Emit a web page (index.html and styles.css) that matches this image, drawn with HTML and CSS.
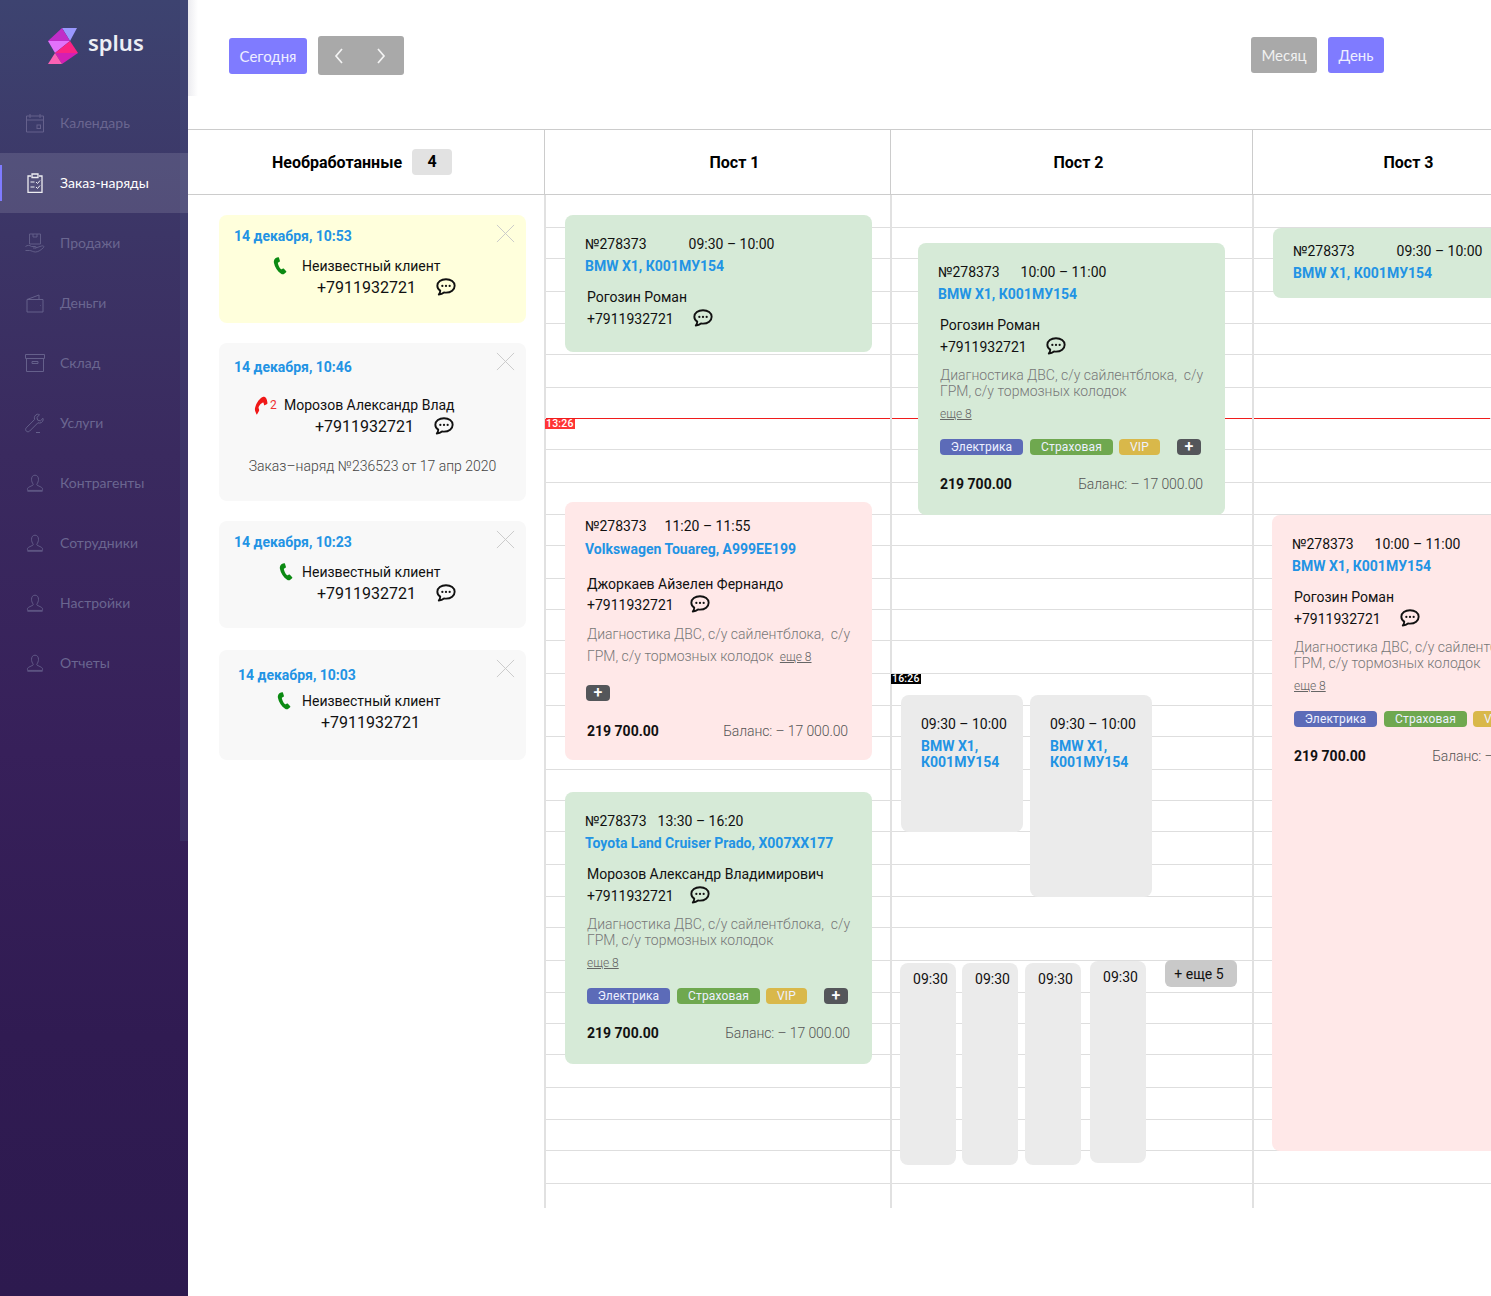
FILE: index.html
```html
<!DOCTYPE html>
<html lang="ru">
<head>
<meta charset="utf-8">
<title>splus</title>
<link rel="stylesheet" href="styles.css">
</head>
<body>
<svg class="sprite" aria-hidden="true">
  <symbol id="chat" viewBox="0 0 18 16"><path d="M9 1C4.600 1 1.200 3.400 1.200 6.900c0 1.900 1 3.400 2.600 4.400 0 1.100-.4 2.300-1.300 3.500 1.900-.2 3.500-.9 4.700-1.900.6.100 1.200.2 1.800.2 4.400 0 7.800-2.700 7.800-6.200S13.400 1 9 1z" fill="none" stroke="currentColor" stroke-width="1.700" stroke-linejoin="round"/><circle cx="5.700" cy="7" r="1" fill="currentColor"/><circle cx="9" cy="7" r="1" fill="currentColor"/><circle cx="12.300" cy="7" r="1" fill="currentColor"/></symbol>
  <symbol id="phone" viewBox="0 0 14 18"><path d="M3.300.8 5 .2c.4-.1.700 0 .9.400l1 3.200c.1.400 0 .7-.3.900L5.200 5.500c-.3.200-.4.500-.3.900.5 2.200 1.500 4.100 2.900 5.700.2.300.6.300.9.200l1.300-.7c.3-.2.700-.1.900.2l2.300 2.500c.3.300.2.700-.1.900l-1.500 1.300c-1.100 1-2.300 1.200-3.500.3C4.500 14.500 1.700 10.300.900 5.800.5 3.600 1.500 1.700 3.300.8z" fill="currentColor"/></symbol>
  <symbol id="close" viewBox="0 0 20 20"><path d="M1 1l18 18M19 1 1 19" fill="none" stroke="currentColor" stroke-width="1"/></symbol>
  <symbol id="i-cal" viewBox="0 0 20 20"><path d="M1.500 3h17v16h-17zM1.500 7h17M5 1v4M15 1v4" fill="none" stroke="currentColor"/><rect x="12" y="12" width="3.500" height="3.500" fill="none" stroke="currentColor"/></symbol>
  <symbol id="i-clip" viewBox="0 0 20 20"><path d="M6 3H3v16.500h14V3h-3M7 1h6v3.500H7z" fill="none" stroke="currentColor" stroke-width="1.300"/><path d="M5.500 9h4M5.500 14h4M11 9l1.500 1.500L15 7.500M11 14l1.500 1.500 2.500-3" fill="none" stroke="currentColor"/></symbol>
  <symbol id="i-hand" viewBox="0 0 20 20"><path d="M4.500 1h11v10h-11zM8 1v3h4V1" fill="none" stroke="currentColor" stroke-width=".9"/><path d="M.5 13.500c2-1.500 4-1.500 6 0h4c1 0 1 1.500 0 1.500H8m2.500 0 6-2c2-.5 3 .5 2 1.500-2 2-5 4.500-8 4.500-2.500 0-4-1.500-6-1.500H.5" fill="none" stroke="currentColor" stroke-width=".9"/></symbol>
  <symbol id="i-wallet" viewBox="0 0 20 20"><path d="M2 6.500 14 2v4.500M18 6.500H2v12.500h16zM15.500 12.500h.5" fill="none" stroke="currentColor"/></symbol>
  <symbol id="i-box" viewBox="0 0 20 20"><path d="M.5 1.500h19v4H.5zM1.500 5.500v13h17v-13M7 8.500h6v2H7z" fill="none" stroke="currentColor"/></symbol>
  <symbol id="i-wrench" viewBox="0 0 20 20"><path d="M12.500 1.200c-2.500.5-3.800 3-2.900 5.300L1.300 14.800c-1 1-.8 2.500 0 3.300.9.900 2.300 1 3.300 0l8.300-8.300c2.400.9 4.900-.4 5.300-3 0-.6-.1-1-.2-1.500l-2.600 2.600-2.800-.8-.7-2.700 2.600-2.600c-.6-.3-1.300-.7-2-.6zM11 19.500h4" fill="none" stroke="currentColor"/></symbol>
  <symbol id="i-user" viewBox="-1.500 -1.500 23 23"><path d="M10 1C7.500 1 6 3 6 5.700c0 2.300.9 4.300 1.800 5.500.3.500.2 1-.2 1.300L2.500 15c-.9.500-1.200 1.300-1.200 2.200v1.300h17.400v-1.300c0-.9-.3-1.700-1.200-2.200l-5.100-2.500c-.4-.3-.5-.8-.2-1.300.9-1.200 1.800-3.200 1.800-5.500C14 3 12.500 1 10 1z" fill="none" stroke="currentColor"/><path d="M1.300 19.500h17.400" stroke="currentColor"/></symbol>
</svg>

<div class="app">
  <aside class="sidebar">
    <div class="logo">
      <svg class="logo-mark" viewBox="0 0 30 36" aria-hidden="true">
        <polygon points="14,0 29,0 22,13" fill="#9a98ff"/>
        <polygon points="14,0 22,13 0,13" fill="#c02dc8"/>
        <polygon points="0,13 22,13 7,25" fill="#e272fb"/>
        <polygon points="22,13 30,25 7,25" fill="#fb2384"/>
        <polygon points="7,25 30,25 14,36" fill="#d41fb4"/>
        <polygon points="7,25 14,36 0,36" fill="#fb62b4"/>
      </svg>
      <span class="logo-text">splus</span>
    </div>
    <nav class="nav">
      <a class="nav-item"><svg class="nav-icon"><use href="#i-cal"/></svg>Календарь</a>
      <a class="nav-item nav-active"><svg class="nav-icon"><use href="#i-clip"/></svg>Заказ-наряды</a>
      <a class="nav-item"><svg class="nav-icon"><use href="#i-hand"/></svg>Продажи</a>
      <a class="nav-item"><svg class="nav-icon"><use href="#i-wallet"/></svg>Деньги</a>
      <a class="nav-item"><svg class="nav-icon"><use href="#i-box"/></svg>Склад</a>
      <a class="nav-item"><svg class="nav-icon"><use href="#i-wrench"/></svg>Услуги</a>
      <a class="nav-item"><svg class="nav-icon"><use href="#i-user"/></svg>Контрагенты</a>
      <a class="nav-item"><svg class="nav-icon"><use href="#i-user"/></svg>Сотрудники</a>
      <a class="nav-item"><svg class="nav-icon"><use href="#i-user"/></svg>Настройки</a>
      <a class="nav-item"><svg class="nav-icon"><use href="#i-user"/></svg>Отчеты</a>
    </nav>
  </aside>

  <main class="main">
    <header class="toolbar">
      <button class="btn btn-primary btn-today">Сегодня</button>
      <div class="btn-group">
        <svg class="chev" viewBox="0 0 10 16"><path d="M8 1 2 8l6 7" fill="none" stroke="currentColor" stroke-width="1.700"/></svg>
        <svg class="chev" viewBox="0 0 10 16"><path d="m2 1 6 7-6 7" fill="none" stroke="currentColor" stroke-width="1.700"/></svg>
      </div>
      <div class="views">
        <button class="btn btn-gray btn-month">Месяц</button>
        <button class="btn btn-primary btn-day">День</button>
      </div>
    </header>

    <div class="heads">
      <div class="head head-queue">Необработанные <span class="count">4</span></div>
      <div class="head head-1">Пост 1</div>
      <div class="head head-2">Пост 2</div>
      <div class="head head-3">Пост 3</div>
    </div>

    <div class="schedule">
      <div class="rows">
        <div class="row r33"></div><div class="row r31"></div><div class="row r33"></div><div class="row r32"></div><div class="row r31"></div><div class="row r33"></div><div class="row r31"></div><div class="row r31"></div><div class="row r33"></div><div class="row r32"></div><div class="row r31"></div><div class="row r33"></div><div class="row r31"></div><div class="row r31"></div><div class="row r33"></div><div class="row r32"></div><div class="row r31"></div><div class="row r33"></div><div class="row r31"></div><div class="row r31"></div><div class="row r33"></div><div class="row r32"></div><div class="row r31"></div><div class="row r33"></div><div class="row r32"></div><div class="row r31"></div><div class="row r31"></div><div class="row r33"></div><div class="row r32"></div><div class="row r31"></div><div class="row r33"></div>
      </div>
      <div class="now-line"></div>

      <section class="queue">
        <article class="q-card q-yellow q-1">
          <svg class="q-close"><use href="#close"/></svg>
          <div class="q-date">14 декабря, 10:53</div>
          <div class="q-caller q-in-1"><svg class="ph ph-green"><use href="#phone"/></svg><span>Неизвестный клиент</span></div>
          <div class="q-num n-98">+7911932721<svg class="chat chat-q"><use href="#chat"/></svg></div>
        </article>
        <article class="q-card q-2">
          <svg class="q-close"><use href="#close"/></svg>
          <div class="q-date">14 декабря, 10:46</div>
          <div class="q-caller q-in-2"><svg class="ph ph-red"><use href="#phone"/></svg><span class="miss">2</span><span>Морозов Александр Влад</span></div>
          <div class="q-num n-96">+7911932721<svg class="chat chat-q"><use href="#chat"/></svg></div>
          <div class="q-order">Заказ–наряд №236523 от 17 апр 2020</div>
        </article>
        <article class="q-card q-3">
          <svg class="q-close"><use href="#close"/></svg>
          <div class="q-date">14 декабря, 10:23</div>
          <div class="q-caller q-in-3"><svg class="ph ph-green"><use href="#phone"/></svg><span>Неизвестный клиент</span></div>
          <div class="q-num n-98">+7911932721<svg class="chat chat-q"><use href="#chat"/></svg></div>
        </article>
        <article class="q-card q-4">
          <svg class="q-close"><use href="#close"/></svg>
          <div class="q-date">14 декабря, 10:03</div>
          <div class="q-caller q-in-4"><svg class="ph ph-green"><use href="#phone"/></svg><span>Неизвестный клиент</span></div>
          <div class="q-num n-102">+7911932721</div>
        </article>
      </section>

      <section class="col">
        <span class="stamp stamp-red">13:26</span>
        <article class="ev green ev-a">
          <div class="e-head"><span>№278373</span><span class="gap-42">09:30 – 10:00</span></div>
          <div class="e-car">BMW X1, К001МУ154</div>
          <div class="e-name">Рогозин Роман</div>
          <div class="e-phone">+7911932721<svg class="chat chat-21"><use href="#chat"/></svg></div>
        </article>
        <article class="ev pink ev-d">
          <div class="e-head"><span>№278373</span><span class="gap-18">11:20 – 11:55</span></div>
          <div class="e-car e-car-d">Volkswagen Touareg, А999ЕЕ199</div>
          <div class="e-name e-name-d">Джоркаев Айзелен Фернандо</div>
          <div class="e-phone e-phone-d">+7911932721<svg class="chat chat-18"><use href="#chat"/></svg></div>
          <div class="e-desc e-desc-d">Диагностика ДВС, с/у сайлентблока,&nbsp; с/у<br>ГРМ, с/у тормозных колодок <a class="e-more-in">еще 8</a></div>
          <div class="tags tags-d"><span class="tag t-plus">+</span></div>
          <div class="e-total e-total-d"><b>219 700.00</b><span>Баланс: – 17 000.00</span></div>
        </article>
        <article class="ev green ev-e">
          <div class="e-head"><span>№278373</span><span class="gap-11">13:30 – 16:20</span></div>
          <div class="e-car">Toyota Land Cruiser Prado, Х007ХХ177</div>
          <div class="e-name">Морозов Александр Владимирович</div>
          <div class="e-phone">+7911932721<svg class="chat chat-18"><use href="#chat"/></svg></div>
          <div class="e-desc">Диагностика ДВС, с/у сайлентблока,&nbsp; с/у<br>ГРМ, с/у тормозных колодок</div>
          <a class="e-more">еще 8</a>
          <div class="tags"><span class="tag t-blue">Электрика</span><span class="tag t-green">Страховая</span><span class="tag t-gold">VIP</span><span class="tag t-plus">+</span></div>
          <div class="e-total"><b>219 700.00</b><span>Баланс: – 17 000.00</span></div>
        </article>
      </section>

      <section class="col">
        <span class="stamp stamp-black">16:26</span>
        <article class="ev green ev-b">
          <div class="e-head"><span>№278373</span><span class="gap-21">10:00 – 11:00</span></div>
          <div class="e-car">BMW X1, К001МУ154</div>
          <div class="e-name">Рогозин Роман</div>
          <div class="e-phone">+7911932721<svg class="chat chat-21"><use href="#chat"/></svg></div>
          <div class="e-desc">Диагностика ДВС, с/у сайлентблока,&nbsp; с/у<br>ГРМ, с/у тормозных колодок</div>
          <a class="e-more">еще 8</a>
          <div class="tags"><span class="tag t-blue">Электрика</span><span class="tag t-green">Страховая</span><span class="tag t-gold">VIP</span><span class="tag t-plus">+</span></div>
          <div class="e-total"><b>219 700.00</b><span>Баланс: – 17 000.00</span></div>
        </article>
        <article class="ev gray ev-g">
          <div class="e-head">09:30 – 10:00</div>
          <div class="e-car e-car-wrap">BMW X1,<br>К001МУ154</div>
        </article>
        <article class="ev gray ev-h">
          <div class="e-head">09:30 – 10:00</div>
          <div class="e-car e-car-wrap">BMW X1,<br>К001МУ154</div>
        </article>
        <article class="ev gray mini ev-i">09:30</article>
        <article class="ev gray mini ev-j">09:30</article>
        <article class="ev gray mini ev-k">09:30</article>
        <article class="ev gray mini ev-l">09:30</article>
        <a class="more-chip">+ еще 5</a>
      </section>

      <section class="col">
        <article class="ev green ev-c">
          <div class="e-head"><span>№278373</span><span class="gap-42">09:30 – 10:00</span></div>
          <div class="e-car">BMW X1, К001МУ154</div>
        </article>
        <article class="ev pink ev-f">
          <div class="e-head"><span>№278373</span><span class="gap-21">10:00 – 11:00</span></div>
          <div class="e-car">BMW X1, К001МУ154</div>
          <div class="e-name">Рогозин Роман</div>
          <div class="e-phone">+7911932721<svg class="chat chat-21"><use href="#chat"/></svg></div>
          <div class="e-desc">Диагностика ДВС, с/у сайлентблока,&nbsp; с/у<br>ГРМ, с/у тормозных колодок</div>
          <a class="e-more">еще 8</a>
          <div class="tags"><span class="tag t-blue">Электрика</span><span class="tag t-green">Страховая</span><span class="tag t-gold">VIP</span><span class="tag t-plus">+</span></div>
          <div class="e-total"><b>219 700.00</b><span>Баланс: – 17 000.00</span></div>
        </article>
      </section>
    </div>
  </main>
</div>
</body>
</html>
```

FILE: styles.css
```css
* { box-sizing: border-box; }
html, body { margin: 0; height: 100%; overflow: hidden; background: #fff; }
body { font-family: Roboto, "Liberation Sans", sans-serif; font-size: 14px; color: #111; }
.sprite { display: none; }
a { display: block; }

.app { display: flex; height: 1296px; }

/* sidebar */
.sidebar {
  position: relative;
  flex: 0 0 188px;
  background: linear-gradient(180deg, #3d4370 0%, #3c3566 18%, #3a2a5f 35%, #37205a 58%, #301b52 80%, #2d1a4f 100%);
  font-family: Lato, "Open Sans", sans-serif;
}
.sidebar::after {
  content: "";
  position: absolute;
  top: 0;
  right: 0;
  width: 8px;
  height: 841px;
  background: rgba(72, 84, 130, .28);
}
.logo { display: flex; align-items: center; height: 93px; padding: 0 0 1px 48px; }
.logo-mark { width: 30px; height: 36px; flex: none; }
.logo-text { margin: -8px 0 0 10px; font: 600 22px/1 "Noto Sans", sans-serif; color: #eceef4; }
.nav-item {
  position: relative;
  z-index: 1;
  display: flex;
  align-items: center;
  height: 60px;
  padding: 0 0 2px 25px;
  color: #6a6690;
  font-size: 14px;
}
.nav-icon { width: 20px; height: 20px; margin: 2px 15px 0 0; flex: none; opacity: .9; }
.nav-active { background: rgba(255, 255, 255, .12); color: #fff; }
.nav-active::before {
  content: "";
  position: absolute;
  left: 0;
  top: 12px;
  width: 2px;
  height: 36px;
  background: #7f7bff;
}

/* main */
.main { flex: 1; min-width: 0; overflow: hidden; }
.toolbar {
  position: relative;
  display: flex;
  align-items: flex-start;
  height: 129px;
  padding: 36px 107px 0 41px;
  font-family: Lato, "Open Sans", sans-serif;
}
.toolbar::before {
  content: "";
  position: absolute;
  left: 0;
  top: 0;
  width: 10px;
  height: 96px;
  background: linear-gradient(90deg, #ececf0, #fff);
}
.btn {
  height: 36px;
  border: 0;
  border-radius: 3px;
  padding: 0;
  font: 15px Lato, "Open Sans", sans-serif;
  color: #eef;
}
.btn-primary { background: #7f7bff; }
.btn-gray { background: #a9a9a9; color: #f1f1f1; }
.btn-today { width: 78px; margin-top: 2px; }
.btn-group {
  display: flex;
  align-items: center;
  gap: 32px;
  width: 86px;
  height: 39px;
  margin-left: 11px;
  padding-left: 16px;
  background: #a9a9a9;
  border-radius: 3px;
  color: #f4f4f4;
}
.chev { width: 10px; height: 16px; }
.views { display: flex; gap: 11px; margin: 1px 0 0 auto; }
.btn-month { width: 66px; }
.btn-day { width: 56px; }

.heads {
  display: grid;
  grid-template-columns: 356px 346px 362px 310px;
  height: 66px;
  border-top: 1px solid #ccc;
  border-bottom: 1px solid #ccc;
}
.head {
  display: flex;
  align-items: center;
  justify-content: center;
  font-size: 16px;
  font-weight: 700;
  color: #000;
}
.head-queue { gap: 10px; padding-right: 8px; white-space: nowrap; }
.count {
  width: 40px;
  height: 26px;
  border-radius: 4px;
  background: #e2e2e2;
  text-align: center;
  line-height: 25px;
}
.head-1, .head-2, .head-3 { border-left: 1px solid #ccc; }
.head-1 { padding-left: 34px; }
.head-2 { padding-left: 14px; }
.head-3 { padding-left: 2px; }

/* schedule */
.schedule {
  position: relative;
  display: grid;
  grid-template-columns: 356px 346px 362px 310px;
  height: 1014px;
}
.rows { position: absolute; top: 0; left: 357px; right: 0; }
.row { border-bottom: 1px solid #dedede; }
.r31 { height: 31px; }
.r32 { height: 32px; }
.r33 { height: 33px; }
.now-line {
  position: absolute;
  left: 357px;
  right: 1px;
  top: 223px;
  height: 1px;
  background: #f01c1c;
}

.queue {
  position: relative;
  display: flex;
  flex-direction: column;
  gap: 20px;
  padding: 20px 0 0 31px;
}
.q-card {
  position: relative;
  width: 307px;
  border-radius: 8px;
  background: #f8f8f8;
}
.q-yellow { background: #ffffdc; }
.q-1 { padding: 11px 0 24px; }
.q-2 { padding: 14px 0 25px; }
.q-3 { padding: 11px 0 23px; }
.q-4 { margin-top: 2px; padding: 15px 0 26px; }
.q-close { position: absolute; top: 9px; right: 11px; width: 19px; height: 19px; color: #c9c9c9; }
.q-date { padding-left: 15px; font-weight: 700; line-height: 20px; color: #2293e4; }
.q-4 .q-date { padding-left: 19px; }
.q-caller { display: flex; align-items: center; line-height: 20px; margin-top: 10px; }
.q-2 .q-caller { margin-top: 18px; }
.q-4 .q-caller { margin-top: 6px; }
.q-in-1 { padding-left: 54px; }
.q-in-2 { padding-left: 36px; }
.q-in-3 { padding-left: 60px; }
.q-in-4 { padding-left: 58px; }
.ph { width: 14px; height: 18px; flex: none; margin-right: 15px; }
.q-in-2 .ph { width: 12px; height: 17px; margin-right: 3px; }
.q-in-3 .ph { margin-right: 9px; }
.q-in-4 .ph { margin-right: 11px; }
.ph-green { color: #0b8a12; }
.ph-red { color: #f01818; transform: rotate(90deg) scale(1.65, .85); }
.miss { width: 14px; font-size: 12px; color: #f03030; }
.q-num { display: flex; align-items: center; margin-top: 1px; font-size: 16px; line-height: 22px; }
.n-96 { padding-left: 96px; }
.n-98 { padding-left: 98px; }
.n-102 { padding-left: 102px; }
.q-order { margin-top: 18px; text-align: center; line-height: 20px; font-weight: 300; color: #444; }

.chat { width: 20px; height: 18px; flex: none; margin-top: -2px; color: #111; }
.chat-q { margin-left: 20px; }
.chat-21 { margin-left: 19px; }
.chat-18 { margin-left: 16px; }

.col {
  position: relative;
  border-left: 2px solid #e1e1e1;
  height: 1013px;
}
.stamp {
  position: absolute;
  left: -1px;
  width: 30px;
  height: 10px;
  padding-left: 1px;
  font-size: 10.5px;
  font-weight: 500;
  letter-spacing: .2px;
  line-height: 10px;
  color: #fff;
  z-index: 2;
}
.stamp-red { top: 224px; background: #ff3434; }
.stamp-black { top: 479px; background: #000; }

.ev {
  position: absolute;
  z-index: 1;
  width: 307px;
  padding: 19px 22px 0 20px;
  border-radius: 8px;
  line-height: 20px;
}
.green { background: #d6ead7; }
.pink { background: #ffe8e8; }
.gray { background: #ebebeb; }
.ev-a { left: 19px; top: 20px; height: 137px; }
.ev-d { left: 19px; top: 307px; height: 258px; padding-top: 14px; padding-right: 24px; }
.ev-e { left: 19px; top: 597px; height: 272px; }
.ev-b { left: 26px; top: 48px; height: 272px; }
.ev-g { left: 9px; top: 500px; width: 122px; height: 137px; }
.ev-h { left: 138px; top: 500px; width: 122px; height: 202px; }
.ev-c { left: 19px; top: 33px; height: 70px; padding-top: 13px; }
.ev-f { left: 18px; top: 320px; height: 636px; }
.mini { width: 56px; height: 202px; padding: 6px 0 0 5px; text-align: center; }
.ev-i { left: 8px; top: 768px; }
.ev-j { left: 70px; top: 768px; }
.ev-k { left: 133px; top: 768px; }
.ev-l { left: 198px; top: 766px; }
.more-chip {
  position: absolute;
  z-index: 1;
  left: 273px;
  top: 765px;
  width: 72px;
  height: 27px;
  padding-right: 4px;
  border-radius: 6px;
  background: #c9c9c9;
  text-align: center;
  line-height: 28px;
}

.e-head { display: flex; white-space: nowrap; }
.gap-11 { margin-left: 11px; }
.gap-18 { margin-left: 18px; }
.gap-21 { margin-left: 21px; }
.gap-42 { margin-left: 42px; }
.e-car { margin-top: 2px; font-weight: 700; color: #2293e4; white-space: nowrap; }
.e-car-d { margin-top: 3px; }
.e-car-wrap { margin-top: 4px; line-height: 16px; }
.e-name { margin-top: 11px; padding-left: 2px; white-space: nowrap; }
.e-name-d { margin-top: 15px; }
.e-phone { display: flex; align-items: center; margin-top: 2px; padding-left: 2px; }
.e-phone-d { margin-top: 1px; }
.e-desc {
  margin-top: 10px;
  padding-left: 2px;
  font-weight: 300;
  line-height: 16px;
  color: #777;
  white-space: nowrap;
}
.e-desc-d { margin-top: 8px; line-height: 22px; }
.e-more {
  display: inline-block;
  margin: 7px 0 0 2px;
  font-size: 12px;
  font-weight: 300;
  line-height: 16px;
  color: #666;
  text-decoration: underline;
  vertical-align: top;
}
.e-more-in { display: inline; margin-left: 3px; font-size: 12px; color: #666; text-decoration: underline; }
.tags { display: flex; margin-top: 17px; padding-left: 2px; }
.tags-d { padding-left: 1px; }
.tag {
  width: 83px;
  height: 16px;
  margin-right: 7px;
  border-radius: 4px;
  font-size: 12px;
  line-height: 16px;
  letter-spacing: .15px;
  text-align: center;
  color: #eef1ff;
  white-space: nowrap;
  flex: none;
}
.t-blue { background: #5c6bb8; }
.t-green { margin-right: 6px; background: #6fa84f; }
.t-gold { width: 41px; background: #d9b84a; margin-right: 17px; }
.t-plus { width: 24px; background: #54565a; font-size: 16px; font-weight: 500; letter-spacing: 0; color: #fff; }
.e-total { display: flex; justify-content: space-between; margin-top: 19px; padding-left: 2px; white-space: nowrap; }
.e-total-d { margin-top: 20px; }
.e-total b { font-weight: 700; color: #111; }
.e-total span { font-weight: 300; letter-spacing: -.1px; color: #555; }
```
